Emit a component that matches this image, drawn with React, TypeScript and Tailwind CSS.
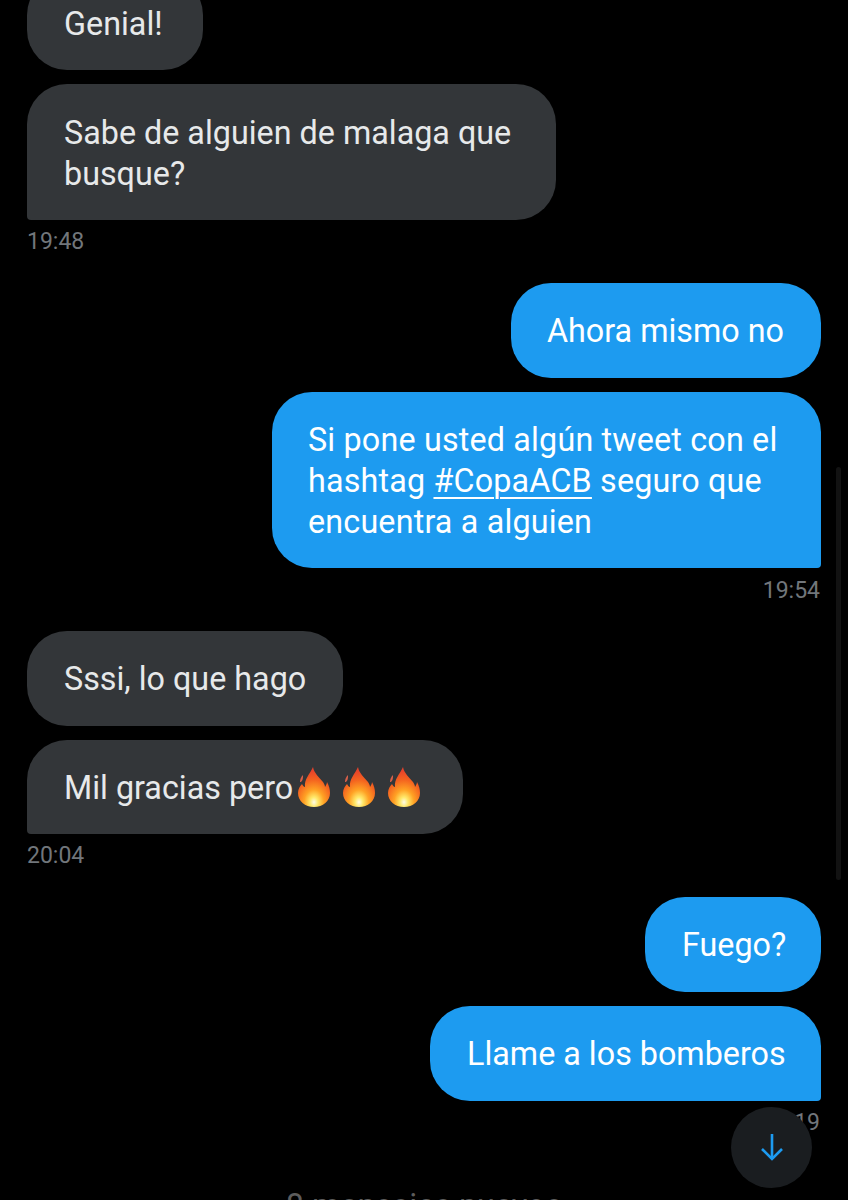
function Flame() {
  return (
    <svg viewBox="0 0 32 40" className="w-[32px] h-[40px] shrink-0">
      <defs>
        <radialGradient id="flameFill" cx="0.5" cy="0.88" r="0.78">
          <stop offset="0" stopColor="#fffce8" />
          <stop offset="0.16" stopColor="#ffe96a" />
          <stop offset="0.4" stopColor="#ffa224" />
          <stop offset="0.72" stopColor="#f4631f" />
          <stop offset="1" stopColor="#e8432a" />
        </radialGradient>
      </defs>
      <path
        d="M15 0C16 6 21 10 25 15 26 17 27 18 27 20 28 18 29 17 29 15 31 19 32 22 32 26 32 34 25 40 16 40 7 40 0 34 0 26 0 22 2 19 4 17 5 19 6 20 7 20 6 12 12 7 15 0z"
        fill="url(#flameFill)"
      />
      <path d="M2 15c0-3 1-5 3-7 0 3 0 5-2 7z" fill="#d9604a" />
    </svg>
  )
}

function Time({ children, right, className }: { children: string; right?: boolean; className: string }) {
  return (
    <div className={`${className} text-[23px] leading-[28px] text-[#71767b] ${right ? 'text-right pr-[1px]' : ''}`}>
      {children}
    </div>
  )
}

export default function App(): React.ReactElement {
  return (
    <div className="relative h-[1200px] w-[848px] overflow-hidden bg-black font-['Roboto',sans-serif] text-[32.3px] leading-[41px]">
      <div className="flex flex-col px-[27px] -mt-[25px]">
        {/* received */}
        <div className="self-start rounded-[40px] bg-[#333639] pl-[37px] pr-[40px] pt-[29px] pb-[25px] text-[#e7e9ea]">Genial!</div>
        <div className="self-start mt-[14px] w-[529px] rounded-[40px] rounded-bl-[4px] bg-[#333639] pl-[37px] pr-[30px] pt-[29px] pb-[25px] text-[#e7e9ea]">
          Sabe de alguien de malaga que busque?
        </div>
        <Time className="mt-[8px]">19:48</Time>

        {/* sent */}
        <div className="self-end mt-[27px] rounded-[40px] bg-[#1d9bf0] pl-[36px] pr-[37px] pt-[28px] pb-[26px] text-white">Ahora mismo no</div>
        <div className="self-end mt-[14px] w-[549px] rounded-[40px] rounded-br-[4px] bg-[#1d9bf0] pl-[36px] pr-[30px] pt-[28px] pb-[25px] tracking-[0.17px] text-white">
          Si pone usted algún tweet con el hashtag <span className="underline underline-offset-[5px] decoration-2">#CopaACB</span> seguro que encuentra a alguien
        </div>
        <Time right className="mt-[9px] -mb-[1px]">19:54</Time>

        {/* received */}
        <div className="self-start mt-[27px] rounded-[40px] bg-[#333639] px-[37px] pt-[28px] pb-[26px] text-[#e7e9ea]">Sssi, lo que hago</div>
        <div className="self-start mt-[14px] flex h-[94px] items-center rounded-[40px] rounded-bl-[4px] bg-[#333639] pl-[37px] pr-[43px] text-[#e7e9ea]">
          <span className="mt-[2px]">Mil gracias pero</span>
          <span className="ml-[5px] flex gap-[13px]">
            <Flame />
            <Flame />
            <Flame />
          </span>
        </div>
        <Time className="mt-[8px]">20:04</Time>

        {/* sent */}
        <div className="self-end mt-[27px] w-[176px] rounded-[40px] bg-[#1d9bf0] pl-[37px] pt-[28px] pb-[26px] text-white">Fuego?</div>
        <div className="self-end mt-[14px] w-[391px] rounded-[40px] rounded-br-[4px] bg-[#1d9bf0] pl-[37px] pt-[28px] pb-[26px] text-white">Llame a los bomberos</div>
        <Time right className="mt-[8px]">20:19</Time>

        <div className="mt-[49px] text-center text-[#5c5c5c]">8 mensajes nuevos</div>
      </div>

      {/* scrollbar */}
      <div className="absolute left-[836px] top-[467px] h-[413px] w-[5px] rounded-full bg-[#121212]" />

      {/* scroll to bottom */}
      <div className="absolute left-[731px] top-[1107px] flex h-[81px] w-[81px] items-center justify-center rounded-full bg-[#1a1d20]">
        <svg viewBox="0 0 24 28" className="h-[28px] w-[24px] -mt-[2px] ml-[1px] text-[#1d9bf0]" fill="none" stroke="currentColor" strokeWidth={2.6}>
          <path d="M12 1v25" />
          <path d="M2 16l10 10 10-10" />
        </svg>
      </div>
    </div>
  )
}
